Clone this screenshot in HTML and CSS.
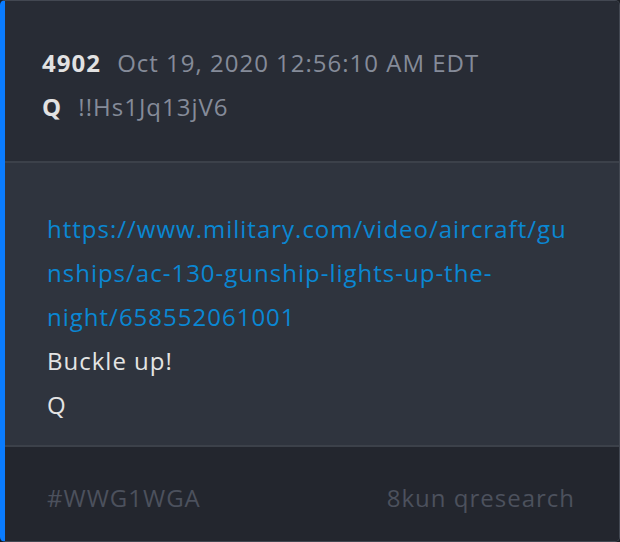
FILE: index.html
```html
<!DOCTYPE html>
<html lang="en">
<head>
    <meta charset="UTF-8">
    <title>Q Drop 4902</title>
    <link rel="stylesheet" href="styles.css">
</head>
<body>
    <div class="card">
        <div class="card-header">
            <div class="meta-line">
                <span class="post-num">4902</span>
                <span class="post-date">Oct 19, 2020 12:56:10 AM EDT</span>
            </div>
            <div class="meta-line">
                <span class="post-num">Q</span>
                <span class="post-date">!!Hs1Jq13jV6</span>
            </div>
        </div>
        <div class="card-body">
            <a class="post-link" href="#">https://www.military.com/video/aircraft/gunships/ac-130-gunship-lights-up-the-night/658552061001</a>
            <p>Buckle up!</p>
            <p>Q</p>
        </div>
        <div class="card-footer">
            <span>#WWG1WGA</span>
            <span>8kun qresearch</span>
        </div>
    </div>
</body>
</html>
```

FILE: styles.css
```css
html, body {
    margin: 0;
    padding: 0;
    background-color: #1b1e24;
}
body {
    font-family: 'Open Sans', 'Noto Sans', sans-serif;
    font-size: 24px;
    letter-spacing: 1px;
}
.card {
    width: 620px;
    height: 542px;
    box-sizing: border-box;
    border: 1px solid #434852;
    border-left: 5px solid #0a7cff;
    border-radius: 5px;
    overflow: hidden;
    display: flex;
    flex-direction: column;
}
.card-header {
    background-color: #282c35;
    height: 162px;
    box-sizing: border-box;
    padding: 40px 44px 0 37px;
    border-bottom: 2px solid #3c414a;
}
.meta-line {
    line-height: 44px;
}
.post-num {
    color: #e2e2e2;
    font-weight: bold;
    margin-right: 9px;
}
.post-date {
    color: #858b99;
}
.card-body {
    background-color: #2f343e;
    height: 284px;
    box-sizing: border-box;
    padding: 44px 44px 0 42px;
    border-bottom: 2px solid #3c414a;
    line-height: 44px;
    color: #e4e4e4;
}
.post-link {
    color: #0a87d3;
    text-decoration: none;
    overflow-wrap: anywhere;
    display: block;
}
.card-body p {
    margin: 0;
}
.card-footer {
    flex: 1;
    background-color: #23262e;
    padding: 29px 44px 0 42px;
    display: flex;
    justify-content: space-between;
    align-items: flex-start;
    line-height: 44px;
    color: #4c515d;
}
```
